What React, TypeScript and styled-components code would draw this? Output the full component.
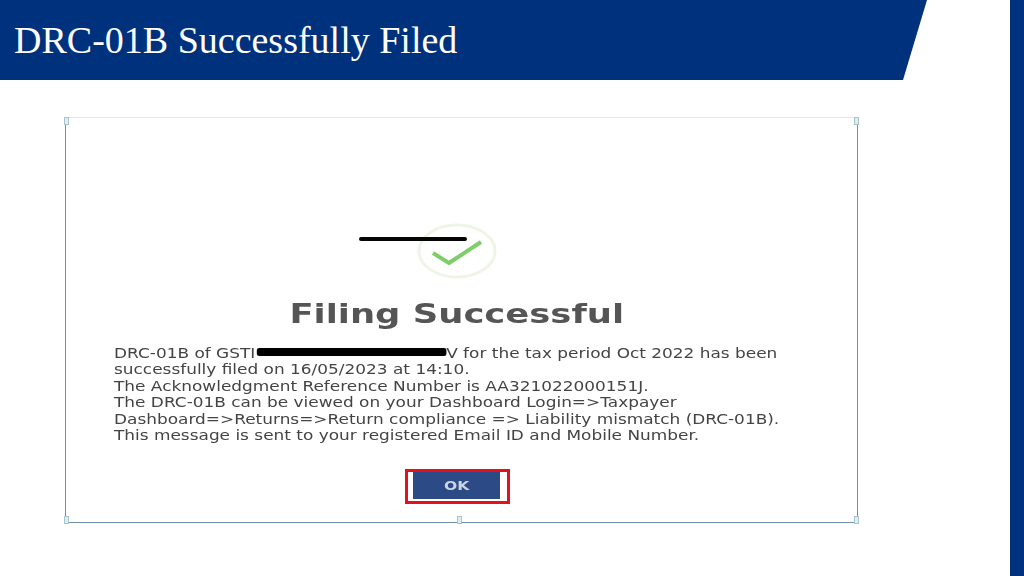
import React from 'react';
import styled, { createGlobalStyle } from 'styled-components';

const GlobalStyle = createGlobalStyle`
  html, body {
    margin: 0;
    padding: 0;
    background: #fff;
  }
`;

const Page = styled.div`
  width: 1024px;
  height: 576px;
  display: flex;
  overflow: hidden;
  background: #fff;
`;

const Main = styled.div`
  flex: 1;
  display: flex;
  flex-direction: column;
`;

const SideStripe = styled.div`
  width: 14px;
  background: #00317c;
`;

const Header = styled.div`
  width: 927px;
  height: 80px;
  padding-left: 14px;
  box-sizing: border-box;
  display: flex;
  align-items: center;
  background: #00317c;
  clip-path: polygon(0 0, 100% 0, 903px 100%, 0 100%);
`;

const Title = styled.h1`
  margin: 0;
  font: 400 38px/1 'Liberation Serif', serif;
  color: #fff;
  white-space: nowrap;
`;

const Dialog = styled.div`
  position: relative;
  width: 793px;
  height: 406px;
  margin: 37px 0 0 65px;
  box-sizing: border-box;
  border: 1px solid #6f8fa8;
  border-top-color: #e6e8e8;
  display: flex;
  flex-direction: column;
  align-items: center;
  padding-top: 105px;
`;

const Handle = styled.span<{ $x: 'left' | 'center' | 'right'; $y: 'top' | 'bottom' }>`
  position: absolute;
  width: 5px;
  height: 8px;
  background: #dcefee;
  border: 1px solid #a9c4cc;
  box-sizing: border-box;
  ${(p) => (p.$x === 'left' ? 'left: -2px;' : p.$x === 'right' ? 'right: -2px;' : 'left: 391px;')}
  ${(p) => (p.$y === 'top' ? 'top: -1px;' : 'bottom: -2px;')}
`;

const IconWrap = styled.div`
  width: 80px;
  height: 56px;
  position: relative;
  left: -5px;
`;

const BlackLine = styled.span`
  position: absolute;
  left: -58px;
  top: 14px;
  width: 108px;
  height: 4px;
  border-radius: 2px;
  background: #050505;
`;

const Heading = styled.h2`
  margin: 18px 0 0;
  font: 700 27px/34px 'DejaVu Sans', sans-serif;
  color: #555;
  white-space: nowrap;
  filter: blur(0.45px);
  position: relative;
  left: -5px;
  transform: scaleX(1.31);
`;

const Message = styled.div`
  align-self: flex-start;
  margin: 15px 0 0 48px;
  font: 400 13.4px/16.4px 'DejaVu Sans', sans-serif;
  color: #444;
  filter: blur(0.45px);
  transform: scaleX(1.264);
  transform-origin: left center;
`;

const Line = styled.div`
  white-space: nowrap;
`;

const Redaction = styled.span`
  display: inline-block;
  width: 150px;
  height: 8px;
  margin-left: 1px;
  vertical-align: 2px;
  background: #000;
  border-radius: 2px;
`;

const OkFrame = styled.div`
  margin-top: 25px;
  width: 105px;
  height: 35px;
  box-sizing: border-box;
  border: 3px solid #e3101f;
  padding-left: 5px;
  display: flex;
  background: #fff;
  position: relative;
  left: -4px;
`;

const OkButton = styled.button`
  width: 87px;
  height: 27px;
  padding: 0;
  border: none;
  background: #2c4a86;
  color: #c9d5e6;
  font: 700 13px/27px 'DejaVu Sans', sans-serif;
`;

const OkLabel = styled.span`
  display: inline-block;
  transform: scaleX(1.2);
  filter: blur(0.35px);
`;

export default function App() {
  return (
    <Page>
      <GlobalStyle />
      <Main>
        <Header>
          <Title>DRC-01B Successfully Filed</Title>
        </Header>
        <Dialog>
          <Handle $x="left" $y="top" />
          <Handle $x="right" $y="top" />
          <Handle $x="left" $y="bottom" />
          <Handle $x="center" $y="bottom" />
          <Handle $x="right" $y="bottom" />
          <IconWrap>
            <svg width="80" height="56" viewBox="0 0 80 56" fill="none">
              <ellipse cx="40" cy="28" rx="38" ry="26" stroke="#eef5e6" strokeWidth="3" />
              <path d="M16 30 L 32 40 L 64 19" stroke="#7fce6a" strokeWidth="4" strokeLinejoin="round" />
            </svg>
            <BlackLine />
          </IconWrap>
          <Heading>Filing Successful</Heading>
          <Message>
            <Line>
              DRC-01B of GSTI<Redaction />V for the tax period Oct 2022 has been
            </Line>
            <Line>successfully filed on 16/05/2023 at 14:10.</Line>
            <Line>The Acknowledgment Reference Number is AA321022000151J.</Line>
            <Line>The DRC-01B can be viewed on your Dashboard Login=&gt;Taxpayer</Line>
            <Line>Dashboard=&gt;Returns=&gt;Return compliance =&gt; Liability mismatch (DRC-01B).</Line>
            <Line>This message is sent to your registered Email ID and Mobile Number.</Line>
          </Message>
          <OkFrame>
            <OkButton>
              <OkLabel>OK</OkLabel>
            </OkButton>
          </OkFrame>
        </Dialog>
      </Main>
      <SideStripe />
    </Page>
  );
}
